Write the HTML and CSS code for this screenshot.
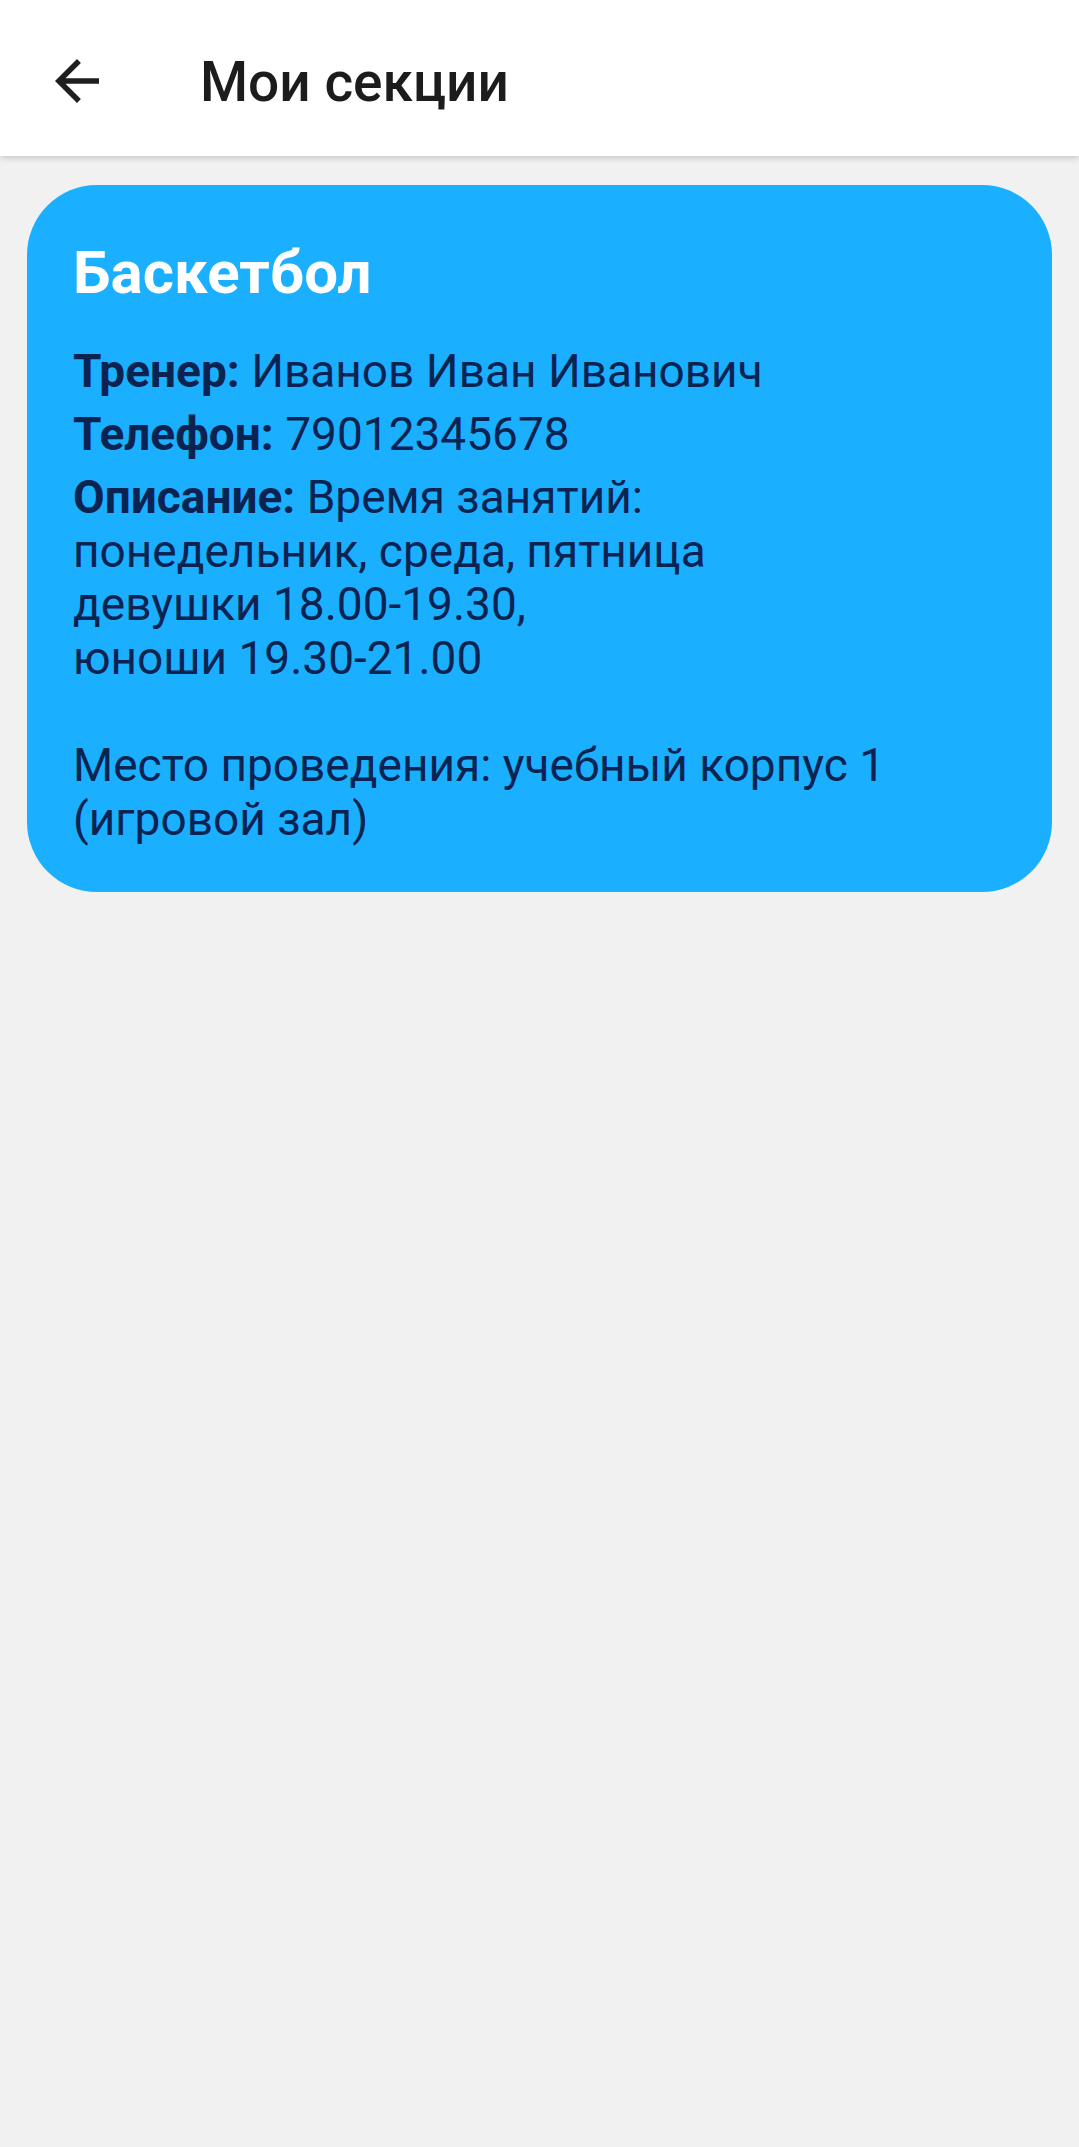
FILE: index.html
```html
<!DOCTYPE html>
<html lang="ru">
<head>
<meta charset="utf-8">
<title>Мои секции</title>
<link rel="stylesheet" href="styles.css">
</head>
<body>
<header class="toolbar">
  <button class="back" aria-label="Назад">
    <svg viewBox="0 0 24 24" width="66" height="66"><path d="M20 11H7.83l5.59-5.59L12 4l-8 8 8 8 1.41-1.41L7.83 13H20v-2z" fill="#1f1f1f"/></svg>
  </button>
  <h1 class="title">Мои секции</h1>
</header>
<main class="content">
  <section class="card">
    <h2 class="card-title">Баскетбол</h2>
    <p class="row"><b>Тренер:</b> Иванов Иван Иванович</p>
    <p class="row"><b>Телефон:</b> 79012345678</p>
    <p class="row desc"><b>Описание:</b> Время занятий:<br>понедельник, среда, пятница<br>девушки 18.00-19.30,<br>юноши 19.30-21.00<br><br>Место проведения: учебный корпус 1<br>(игровой зал)</p>
  </section>
</main>
</body>
</html>
```

FILE: styles.css
```css
html, body {
  margin: 0;
  padding: 0;
}
body {
  background: #f1f1f1;
  font-family: Roboto, "Noto Sans", sans-serif;
  min-height: 2147px;
}
.toolbar {
  height: 156px;
  background: #ffffff;
  display: flex;
  align-items: center;
  box-shadow: 0 2px 6px rgba(0,0,0,0.18);
  position: relative;
}
.back {
  border: 0;
  background: none;
  padding: 0;
  margin: 6px 0 0 44px;
  width: 66px;
  height: 66px;
  display: flex;
}
.title {
  margin: 8px 0 0 90px;
  font-size: 55px;
  font-weight: 500;
  color: #1c1c1c;
}
.content {
  padding: 29px 27px;
}
.card {
  background: #1aafff;
  border-radius: 70px;
  padding: 50px 46px 46px;
  color: #0b2350;
}
.card-title {
  margin: 0 0 34px;
  font-size: 60px;
  font-weight: 700;
  color: #ffffff;
  line-height: 76px;
}
.row {
  margin: 0 0 10px;
  font-size: 46px;
  line-height: 53px;
}
.row b {
  font-weight: 700;
}
.desc {
  margin: 0;
  line-height: 53.6px;
}
```
